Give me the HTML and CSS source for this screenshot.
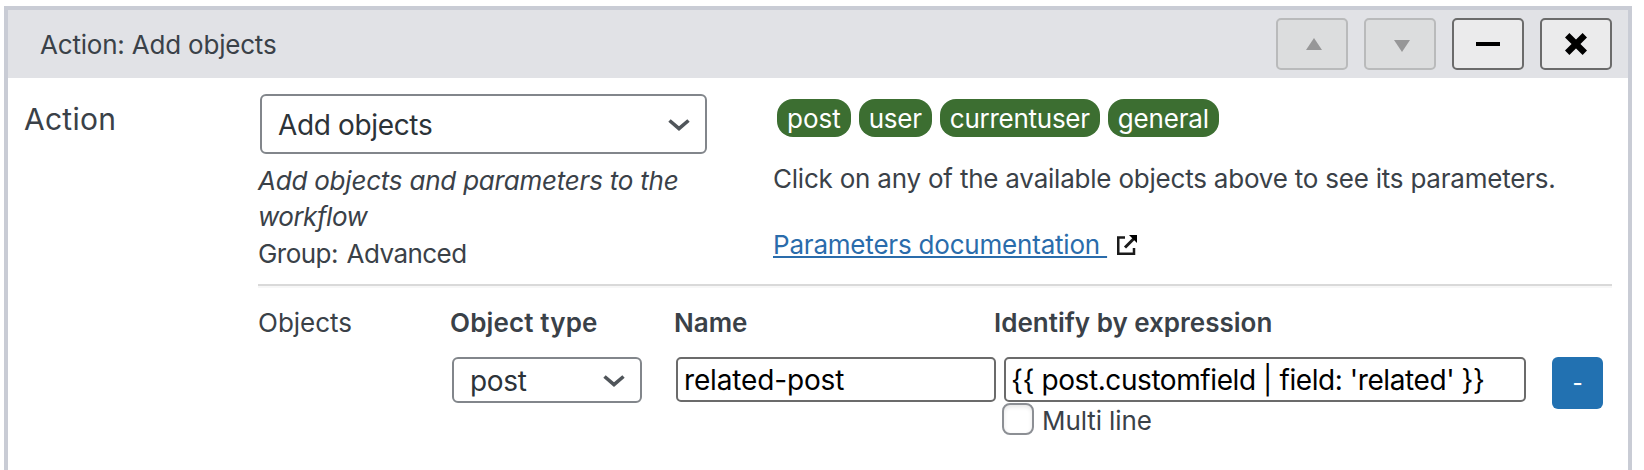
FILE: index.html
```
<!DOCTYPE html>
<html lang="en">
<head>
<meta charset="utf-8">
<title>Action: Add objects</title>
<link rel="stylesheet" href="styles.css">
</head>
<body>
<section class="panel">
  <header class="panel-head">
    <h2 class="title">Action: Add objects</h2>
    <div class="tools">
      <button class="tool" disabled aria-label="Move up"><svg width="68" height="48"><path d="M28 30L36 18L44 30Z" fill="#979798"/></svg></button>
      <button class="tool" disabled aria-label="Move down"><svg width="68" height="48"><path d="M28 20H44L36 32Z" fill="#979798"/></svg></button>
      <button class="tool" aria-label="Collapse"><svg width="68" height="48"><path d="M22 22H46V26H22Z"/></svg></button>
      <button class="tool" aria-label="Remove"><svg width="68" height="48"><path d="M25.200 15.200L42.800 32.800M42.800 15.200L25.200 32.800" stroke="#000" stroke-width="6.200"/></svg></button>
    </div>
  </header>
  <div class="panel-body">
    <div class="row-label">Action</div>
    <div class="content">
      <div class="top">
        <div class="choice">
          <div class="select select-lg"><span>Add objects</span><svg class="chev" width="22" height="14"><path d="M1.500 2.500L11 10.700L20.500 2.500" fill="none" stroke="#50555a" stroke-width="3.600"/></svg></div>
          <p class="desc"><em>Add objects and parameters to the<br><span class="tight">workflow</span></em><br><span class="group">Group: Advanced</span></p>
        </div>
        <div class="info">
          <div class="tags"><span class="tag">post</span><span class="tag tag-user">user</span><span class="tag tag-tight">currentuser</span><span class="tag tag-general">general</span></div>
          <p class="hint">Click on any of the available objects above to see its parameters.</p>
          <p class="docs"><a class="link" href="#">Parameters documentation </a><svg width="20" height="20" fill="none" stroke="#1a1a1a"><path d="M8 2.500H1.250V18.750H17V13" stroke-width="2.500"/><path d="M8 12.500L17 3.500" stroke-width="3"/><path d="M12 0H20V8Z" fill="#000" stroke="none"/></svg></p>
        </div>
      </div>
      <div class="rule"></div>
      <div class="params">
        <div class="cell">Objects</div>
        <div class="cell head wide">Object type</div>
        <div class="cell head">Name</div>
        <div class="cell head">Identify by expression</div>
        <div class="field type"><div class="select select-sm"><span>post</span><svg class="chev" width="22" height="14"><path d="M1.500 2.500L11 10.700L20.500 2.500" fill="none" stroke="#50555a" stroke-width="3.600"/></svg></div></div>
        <div class="field name"><div class="input">related-post</div></div>
        <div class="field expr">
          <div class="input input-expr">{{ post.customfield | field: 'related' }}</div>
          <label class="multi"><span class="box"></span><span class="multi-text">Multi line</span></label>
        </div>
        <button class="minus" aria-label="Remove object"><span class="dash">-</span></button>
      </div>
    </div>
  </div>
</section>
</body>
</html>
```
FILE: styles.css
```
* { box-sizing: border-box; }
body {
  margin: 0;
  height: 470px;
  overflow: hidden;
  background: #fff;
  color: #3a4148;
  font: 26px/36px Inter, sans-serif;
}
h2, p { margin: 0; font-weight: 400; font-size: inherit; }
button { padding: 0; font: inherit; }
svg { display: block; flex: none; }

.panel {
  width: 1628px;
  height: 480px;
  margin: 6px 0 0 4px;
  border: 4px solid #c9ccd5;
}
.panel-head {
  height: 68px;
  padding: 0 16px 0 32px;
  display: flex;
  align-items: center;
  justify-content: space-between;
  background: #e1e2e6;
}
.title { padding-top: 2px; letter-spacing: -.2px; }
.tools { display: flex; gap: 16px; }
.tool {
  width: 72px;
  height: 52px;
  border: 2px solid #6b6b6b;
  border-radius: 5px;
  background: #ebebec;
}
.tool:disabled { border-color: #b9babb; background: #dcddde; }

.panel-body { display: flex; padding: 16px 16px 0; }
.row-label { width: 234px; padding-top: 7px; font-size: 30px; letter-spacing: .25px; }
.content { flex: 1; }
.top { display: flex; height: 190px; }
.choice { width: 515px; }
.select {
  display: flex;
  align-items: center;
  justify-content: space-between;
  border: 2px solid #82868b;
  border-radius: 6px;
  background: #fff;
  color: #2c3338;
  font-size: 28px;
  letter-spacing: -.35px;
}
.select-lg { width: 447px; height: 60px; margin-left: 2px; padding: 1px 15px 0 16px; }
.select-sm { width: 190px; height: 46px; padding: 1px 15px 0 16px; }
.desc { padding-top: 9px; line-height: 36.4px; letter-spacing: -.22px; }
.tight { letter-spacing: -.5px; }
.group { letter-spacing: -.55px; word-spacing: 2px; }

.tags { display: flex; gap: 8px; padding: 5px 0 0 4px; }
.tag {
  height: 38px;
  padding: 0 10px;
  border-radius: 16px;
  background: #3c6e31;
  color: #fff;
  line-height: 40px;
}
.tag-user { letter-spacing: -.25px; }
.tag-tight { letter-spacing: -.26px; }
.tag-general { letter-spacing: -.17px; }
.hint { padding-top: 24px; letter-spacing: -.215px; }
.docs { display: flex; align-items: center; gap: 10px; padding-top: 30px; }
.link {
  color: #2a6cab;
  letter-spacing: -.2px;
  white-space: pre;
  text-decoration: underline 2px;
  text-underline-offset: 2px;
}

.rule { height: 4px; border-top: 2px solid #d9d9d9; background: #f7f7f7; }
.params {
  display: grid;
  grid-template-columns: 192px 224px 320px 558px 60px;
  padding-top: 17px;
}
.head { font-weight: 600; }
.wide { letter-spacing: .15px; }
.head:nth-child(4) { grid-column: 4 / 6; }
.field { padding-top: 16px; }
.type { grid-column: 2; padding-left: 2px; }
.name { padding-left: 2px; }
.expr { padding-left: 10px; }
.input {
  width: 320px;
  height: 45px;
  padding: 0 6px;
  border: 2px solid #6b6b6b;
  border-radius: 5px;
  background: #fff;
  color: #000;
  font-size: 28px;
  line-height: 43px;
  letter-spacing: -.15px;
  white-space: pre;
}
.input-expr { width: 522px; padding-left: 5px; letter-spacing: -.42px; }
.multi { display: flex; align-items: flex-start; gap: 8px; margin-left: -2px; letter-spacing: -.1px; }
.multi-text { padding-top: 1px; }
.box {
  width: 32px;
  height: 32px;
  margin-top: 1px;
  border: 2px solid #8c8f94;
  border-radius: 8px;
  background: #fff;
  box-shadow: inset 0 2px 4px rgba(0, 0, 0, .1);
}
.minus {
  width: 51px;
  height: 52px;
  margin-top: 16px;
  border: 0;
  border-radius: 6px;
  background: #2271b1;
  color: #fff;
}
.dash { display: block; font-size: 22px; font-weight: 500; line-height: 52px; }
```
